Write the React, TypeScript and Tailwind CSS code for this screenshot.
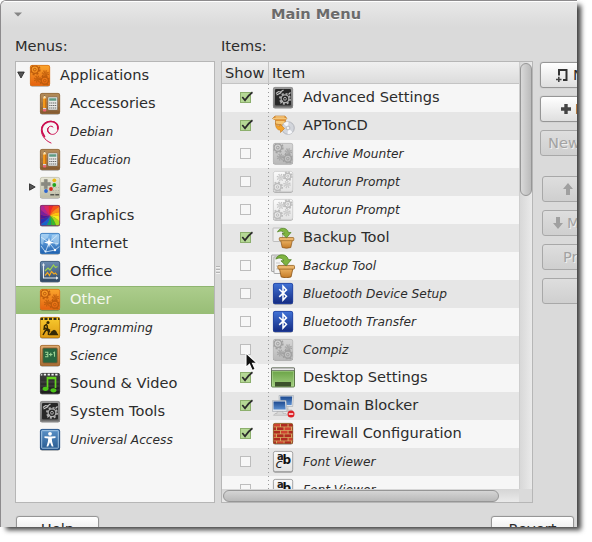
import type { ReactNode } from "react";

type IconName =
  | "gears" | "tools" | "debian" | "games" | "graphics" | "internet" | "office" | "programming"
  | "science" | "video" | "system" | "access" | "apton" | "greyGears" | "paleGears" | "backup"
  | "backupBig" | "bluetooth" | "desktop" | "domain" | "firewall" | "font";

type MenuRow = { label: string; icon: IconName; on?: boolean };

const menus: MenuRow[] = [
  { label: "Accessories", icon: "tools", on: true },
  { label: "Debian", icon: "debian" },
  { label: "Education", icon: "tools" },
  { label: "Games", icon: "games" },
  { label: "Graphics", icon: "graphics", on: true },
  { label: "Internet", icon: "internet", on: true },
  { label: "Office", icon: "office", on: true },
  { label: "Other", icon: "gears", on: true },
  { label: "Programming", icon: "programming" },
  { label: "Science", icon: "science" },
  { label: "Sound & Video", icon: "video", on: true },
  { label: "System Tools", icon: "system", on: true },
  { label: "Universal Access", icon: "access" },
];

const items: MenuRow[] = [
  { label: "Advanced Settings", icon: "system", on: true },
  { label: "APTonCD", icon: "apton", on: true },
  { label: "Archive Mounter", icon: "greyGears" },
  { label: "Autorun Prompt", icon: "paleGears" },
  { label: "Autorun Prompt", icon: "paleGears" },
  { label: "Backup Tool", icon: "backup", on: true },
  { label: "Backup Tool", icon: "backupBig" },
  { label: "Bluetooth Device Setup", icon: "bluetooth" },
  { label: "Bluetooth Transfer", icon: "bluetooth" },
  { label: "Compiz", icon: "greyGears" },
  { label: "Desktop Settings", icon: "desktop", on: true },
  { label: "Domain Blocker", icon: "domain", on: true },
  { label: "Firewall Configuration", icon: "firewall", on: true },
  { label: "Font Viewer", icon: "font" },
  { label: "Font Viewer", icon: "font" },
];

const gradients: [string, string, string][] = [
  ["g-orange", "#fba62c", "#e4600f"],
  ["g-wood", "#b58d5b", "#83592f"],
  ["g-games", "#e9e8d8", "#bdbca6"],
  ["g-blue", "#82bdf0", "#1d5fae"],
  ["g-office", "#6d8db3", "#2f4863"],
  ["g-yellow", "#f9cb2f", "#dd9a12"],
  ["g-frame", "#e0ad72", "#a66b33"],
  ["g-dark", "#3f3f3f", "#1c1c1c"],
  ["g-steel", "#9b9b9b", "#6a6a6a"],
  ["g-access", "#5b93c9", "#27598f"],
  ["g-grey", "#d6d6d6", "#b9b9b9"],
  ["g-pale", "#fbfbfb", "#e2e2e2"],
  ["g-bt", "#4274d8", "#142a80"],
  ["g-desk", "#619c3d", "#a3cf80"],
  ["g-screen", "#1d4a90", "#5b8fd0"],
  ["g-pot", "#f0b869", "#c47a26"],
];

function Defs() {
  return (
    <svg className="absolute h-0 w-0">
      <defs>
        {gradients.map(([id, a, b]) => (
          <linearGradient key={id} id={id} x1="0" y1="0" x2="0" y2="1">
            <stop offset="0" stopColor={a} />
            <stop offset="1" stopColor={b} />
          </linearGradient>
        ))}
        <clipPath id="tile">
          <rect x="2" y="1" width="20" height="21" rx="2" />
        </clipPath>
      </defs>
    </svg>
  );
}

function Tile({ fill, edge, children }: { fill: string; edge: string; children?: ReactNode }) {
  return (
    <>
      <rect x="2" y="2" width="20" height="20.6" rx="2" fill="#000" opacity=".45" />
      <g clipPath="url(#tile)">
        <rect x="2" y="1" width="20" height="21" fill={fill} />
        {children}
      </g>
      <rect x="2.4" y="1.4" width="19.3" height="20.2" rx="1.8" fill="none" stroke={edge} strokeWidth=".8" />
    </>
  );
}

function Gear({ x, y, r, c, w = 1.4 }: { x: number; y: number; r: number; c: string; w?: number }) {
  const step = (2 * Math.PI * (r + 1.2)) / 16;
  return (
    <g fill="none" stroke={c}>
      <circle cx={x} cy={y} r={r} strokeWidth={w} />
      <circle cx={x} cy={y} r={r + 1.2} strokeWidth="1.7" strokeDasharray={`${step} ${step}`} />
      <circle cx={x} cy={y} r={r * 0.36} strokeWidth="1" />
    </g>
  );
}

function GearPair({ c }: { c: string }) {
  return (
    <>
      <Gear x={6.8} y={5.6} r={3.8} c={c} />
      <Gear x={16.8} y={16.6} r={3.6} c={c} />
      <Gear x={17.3} y={9.8} r={1.6} c={c} w={0.9} />
      <Gear x={9.4} y={15} r={1.5} c={c} w={0.9} />
    </>
  );
}

function Pot() {
  return (
    <>
      <path d="M9.500 13.500h12l-1.700 8q-4.300 1.500-8.600 0z" fill="url(#g-pot)" stroke="#8b5518" strokeWidth=".7" />
      <rect x="8.300" y="11.500" width="14.500" height="3.200" rx=".8" fill="#eab56b" stroke="#94601f" strokeWidth=".7" />
      <path d="M6.500 6C8.500 1 16 .8 17.500 6.500H20l-4.500 5.300L11 7.500H13.300C12.500 5 9.500 4.400 6.500 6z" fill="#7fb441" stroke="#4e8021" strokeWidth=".7" />
    </>
  );
}

const hues = ["#e8282f", "#f4511c", "#f98a1a", "#fdc40d", "#f5ee1a", "#a5dc1c", "#37bb2c", "#12a06d", "#1763cc", "#2b30b3", "#4a1a98", "#7b209b", "#b02792", "#da2865"];

function wedge(i: number) {
  const a = (i / hues.length) * 2 * Math.PI - Math.PI / 2;
  const b = ((i + 1) / hues.length) * 2 * Math.PI - Math.PI / 2;
  const p = (t: number, r: number) => `${12 + r * Math.cos(t)} ${11.500 + r * Math.sin(t)}`;
  return `M12 11.5Q${p(a - 0.4, 7)} ${p(a, 17)}L${p(b, 17)}Q${p(b - 0.4, 7)} 12 11.5`;
}

const drawings: Record<IconName, ReactNode> = {
  gears: <Tile fill="url(#g-orange)" edge="#d9731c"><GearPair c="#bd5c0c" /></Tile>,
  greyGears: <Tile fill="url(#g-grey)" edge="#b8b8b8"><GearPair c="#a0a0a0" /></Tile>,
  paleGears: (
    <Tile fill="url(#g-pale)" edge="#c9c9c9">
      <Gear x={6.500} y={17} r={3.500} c="#bcbcbc" />
      <Gear x={16.800} y={6.200} r={3} c="#bcbcbc" />
      <Gear x={9.500} y={7.500} r={1.800} c="#c4c4c4" w={0.9} />
      <Gear x={16} y={14.500} r={1.700} c="#c4c4c4" w={0.9} />
    </Tile>
  ),
  tools: (
    <Tile fill="url(#g-wood)" edge="#926a3d">
      <path d="M2 5h20M2 9h20M2 14h20M2 18h20" stroke="#d0a26d" strokeWidth=".5" opacity=".5" />
      <path d="M5 6.500 6.600 2.800 8.200 6.500V16H5z" fill="#f39a1d" />
      <path d="M5 6.500 6.600 2.800 8.200 6.500z" fill="#f6dfb5" />
      <path d="M6.100 4 6.600 2.800 7.100 4z" fill="#333" />
      <path d="M7.600 6.500V16" stroke="#cf6f10" />
      <path d="M5 16h3.200v1.500H5z" fill="#d7d7d7" />
      <rect x="5" y="17.300" width="3.200" height="2.200" rx=".8" fill="#ed6273" />
      <rect x="10" y="5" width="9.500" height="13" rx=".8" fill="#e7e8e5" stroke="#646058" strokeWidth=".5" />
      <path d="M11.200 6.300h7.100v2.400h-7.100z" fill="#5e9b83" />
      <path d="M11.200 11h7.100M11.200 13.500h7.100M11.200 16h7.100" stroke="#696969" strokeWidth="1.200" strokeDasharray="1.300 .6" />
    </Tile>
  ),
  debian: (
    <g fill="none" stroke="#cb0f50" strokeLinecap="round">
      <path d="M13 23C6.500 20.500 2.500 14 3.500 8.500 4.600 2.700 10.700-.2 16 1.900c3.200 1.300 4.700 4.700 4 7.600-.8 3.300-3.700 5.400-6.500 4.800-3.200-.7-4.800-3.700-3.400-6.300C11.200 5.900 13.900 5.600 15 7" strokeWidth="1" />
      <path d="M6.500 16.500C2.800 11.600 3 6.500 7.300 3.200 10.500.9 15.500.9 18.300 3.500c1.500 1.500 1.900 3.300 1.500 5.300" strokeWidth="1.700" />
      <path d="M12 13.500c-2-.9-2.900-3.200-2-5" strokeWidth="1.200" />
    </g>
  ),
  games: (
    <Tile fill="url(#g-games)" edge="#c3c2b0">
      <path d="M6.300 3.500h3v3h3v3h-3v3h-3v-3h-3v-3h3z" fill="#898980" stroke="#74746c" strokeWidth=".4" />
      <circle cx="16.300" cy="4.300" r="1.900" fill="#e9b813" />
      <circle cx="16.300" cy="9" r="1.900" fill="#23a520" />
      <circle cx="13" cy="13" r="1.900" fill="#d92c1d" />
      <circle cx="8" cy="15" r="1.900" fill="#2c65cf" />
      <path d="M15 14.500h6M15 11.500h6M17 17h4" stroke="#b0b0a3" strokeDasharray="1 1.500" />
      <path d="M12.300 18.700h4m1 0h4" stroke="#56564f" strokeWidth="1.500" />
    </Tile>
  ),
  graphics: <Tile fill="#d33" edge="#7a3a68">{hues.map((h, i) => <path key={h} d={wedge(i)} fill={h} />)}</Tile>,
  internet: (
    <Tile fill="url(#g-blue)" edge="#3b78b8">
      <path d="M2 2h9l-1 4-4 2-1 5-3-2zM14 3l8-1v9l-4 3-2-4-3-2z" fill="#c3e1f8" opacity=".55" />
      <path d="M3 5l8 5.500 8-7M11 10.500 7.500 20M11 10.500l6 7.500 5-4M11 10.500l9 1M7.500 20l9.500-2M3 14l4.500 6" fill="none" stroke="#e3f2fc" strokeWidth=".8" opacity=".9" />
      <path d="M11 5.500l1 3.800 4 1.200-4 1.200-1 4-1-4-4-1.200 4-1.200z" fill="#fff" />
      <circle cx="17" cy="18" r="1.200" fill="#fff" />
      <circle cx="7.500" cy="19.500" r="1" fill="#e7f5ff" />
    </Tile>
  ),
  office: (
    <Tile fill="url(#g-office)" edge="#405a78">
      <path d="M5.500 4v14h14" fill="none" stroke="#e6ecf2" strokeWidth="1.100" />
      <path d="M4 5.500 5.500 3 7 5.500zM18 16.300l2.500 1.700-2.500 1.700z" fill="#e6ecf2" />
      <path d="M7 11l3-3 2 2 3.500-5 2 2.500 2-1" fill="none" stroke="#9ed34a" strokeWidth="1.200" />
      <path d="M7 15.500l2.500-3 2 3 2-4 2.500 2.500 1.500-1 1.500 2" fill="none" stroke="#f1a821" strokeWidth="1.200" />
    </Tile>
  ),
  programming: (
    <Tile fill="url(#g-yellow)" edge="#ba7e12">
      <path d="M2 2.700h20" stroke="#2d281b" strokeWidth="2.500" strokeDasharray="3 1.500" />
      <circle cx="10" cy="6.500" r="1.500" fill="#342905" />
      <path d="M9 8 6.500 10l-.5 4m3-5 .5 4 2.500 1.500M9 12.500l-2 3L5 19m4.500-5.500 1 2.500v3M6 11l6 5" fill="none" stroke="#342905" strokeWidth="1.500" />
      <path d="M10.500 19.300q2-1.800 3-4l2.500-1.500 2 1q1.200 2.500 2.500 4.500z" fill="#342905" />
    </Tile>
  ),
  science: (
    <Tile fill="url(#g-frame)" edge="#a1672e">
      <rect x="4.800" y="4" width="14.500" height="15" rx="1" fill="#28663f" stroke="#8b5c30" strokeWidth=".8" />
      <path d="M7 8.300h2.800v4.400H7M7.700 10.500h2M11 10.500h3.500m-1.750-1.700v3.400M15.300 9l1.200-.7v4.400" fill="none" stroke="#9bd294" strokeWidth="1.100" />
    </Tile>
  ),
  video: (
    <Tile fill="url(#g-dark)" edge="#404040">
      <path d="M2 10h20M2 14h20M2 18h20" stroke="#777" strokeWidth="1" opacity=".35" />
      <path d="M2 2.200h20" stroke="#f2f2f2" strokeWidth="2.600" strokeDasharray="2.300 1.500" />
      <path d="M9.500 17V5.500h8V16" fill="none" stroke="#65d420" strokeWidth="1.700" />
      <path d="M9.500 6.200h8" stroke="#65d420" strokeWidth="2.200" />
      <ellipse cx="7.500" cy="16.800" rx="2.900" ry="2.100" fill="#4bc418" />
      <ellipse cx="15.500" cy="18.300" rx="2.900" ry="2.100" fill="#4bc418" />
    </Tile>
  ),
  system: (
    <Tile fill="url(#g-steel)" edge="#909090">
      <rect x="4" y="3" width="16" height="16.500" rx="1" fill="#282828" />
      <Gear x={14} y={12.800} r={3.900} c="#b0b0b0" w={1.300} />
      <path d="M5 7.500 7.500 5.500l2 .5L12.500 4M5.500 9l5-2.500M9.500 17.500l2.500-3M17.500 8.500l2-2" stroke="#c4c4c4" strokeWidth="1.100" fill="none" />
    </Tile>
  ),
  access: (
    <Tile fill="url(#g-access)" edge="#254e80">
      <rect x="3.700" y="2.700" width="16.600" height="17.500" rx=".6" fill="none" stroke="#b9d4ec" strokeWidth=".8" />
      <circle cx="12" cy="5.800" r="1.900" fill="#fff" />
      <path d="M6.500 8.300 11 8.600h2l4.500-.3v1.600l-3.700.7.300 3 1.400 5h-1.700L12 14.300l-1.800 4.300H8.500l1.400-5 .3-3-3.700-.7z" fill="#fff" />
    </Tile>
  ),
  apton: (
    <>
      <path d="M1.500 4.500 4 2h10l2 2.500-1.500 1.200V10l-3 2-7-2V6z" fill="#dc9137" stroke="#b97422" strokeWidth=".6" />
      <path d="M2 4.700h13.500M4.500 3h9" stroke="#f3c67c" strokeWidth="1.300" />
      <path d="M5 7h8.500v4L5 9.500z" fill="#f5c774" />
      <circle cx="17" cy="14" r="6.300" fill="#d2d5db" stroke="#a3a6ad" strokeWidth=".7" />
      <path d="M17 14 12.500 9.500A6.300 6.300 0 0 1 17.500 7.700zM17 14l4.600 4.300a6.300 6.300 0 0 1-5 2z" fill="#f6f7fa" />
      <circle cx="17" cy="14" r="1.900" fill="#f2f2f2" stroke="#a3a6ad" strokeWidth=".7" />
      <path d="M4.500 9.500q1 3 4.500 2.500v-2l4.500 4.500-4 4v-2.300Q4.500 16 4.500 9.500z" fill="#f2a32c" stroke="#cb7a17" strokeWidth=".6" />
    </>
  ),
  backup: (
    <>
      <rect x="2" y="2" width="9.500" height="13.500" rx=".5" fill="#eee" stroke="#b2b2b2" strokeWidth=".8" />
      <Pot />
    </>
  ),
  backupBig: (
    <>
      <rect x=".5" y="1" width="10" height="16.500" rx=".5" fill="#e2e2e2" stroke="#9b9b9b" strokeWidth=".8" />
      <rect x="3" y="3" width="10" height="16.500" rx=".5" fill="#f4f4f4" stroke="#9b9b9b" strokeWidth=".8" />
      <path d="M5 9h4M5 12h3M5 15h3" stroke="#bbb" strokeWidth=".8" />
      <g transform="translate(-2.700 -1.800) scale(1.150)"><Pot /></g>
    </>
  ),
  bluetooth: (
    <Tile fill="url(#g-bt)" edge="#26449e">
      <path d="M8.200 7.300l7.300 7-3.500 3.700V4.200l3.500 3.700-7.300 7" fill="none" stroke="#fff" strokeWidth="1.500" />
    </Tile>
  ),
  desktop: (
    <>
      <rect x=".5" y="2" width="23" height="19" rx="1" fill="url(#g-desk)" stroke="#43612f" strokeWidth=".8" />
      <path d="M.5 2h23v2.500H.5z" fill="#e9e9e9" stroke="#555" strokeWidth=".6" />
      <rect x="1.600" y="5.300" width="20.800" height="14.700" fill="none" stroke="#b8dc9c" strokeWidth=".7" opacity=".7" />
      <path d="M4 16h16v4.500H4z" fill="#3c512b" />
    </>
  ),
  domain: (
    <>
      <path d="M17 13v3h4l1 1.500h-9" fill="#cfcfcf" stroke="#aaa" strokeWidth=".5" />
      <path d="M8 1.500h14.500l-.8 11H8.500z" fill="#dfe3e8" stroke="#a1a7ae" strokeWidth=".6" />
      <path d="M9.200 2.600h12l-.6 8.400H9.700z" fill="url(#g-screen)" />
      <path d="M1.500 6.500H15l1 11H1.500z" fill="#e3e6ea" stroke="#a1a7ae" strokeWidth=".6" />
      <path d="M2.500 7.600h11.500l.6 8H2.500z" fill="url(#g-screen)" />
      <path d="M6 17.500h6v2h3l1.500 1.800H2.500L4 19.500h2z" fill="#d7d7d7" stroke="#a6a6a6" strokeWidth=".5" />
      <circle cx="20" cy="20" r="3.500" fill="#dc1f25" />
      <path d="M17.800 20h4.400" stroke="#fff" strokeWidth="1.400" />
    </>
  ),
  firewall: (
    <Tile fill="#d4b466" edge="#8c5a32">
      {[0, 1, 2, 3, 4, 5].map((row) =>
        [0, 1, 2, 3].map((col) => (
          <rect key={`${row}-${col}`} x={2.500 + col * 7.500 - (row % 2) * 4} y={1.800 + row * 3.500} width="6.600" height="2.800" fill={(row + col) % 3 === 0 ? "#cf4230" : "#b02a20"} />
        )),
      )}
    </Tile>
  ),
  font: (
    <Tile fill="url(#g-pale)" edge="#8f8f8f">
      <text x="6" y="9.500" fontSize="10" fontWeight="700" fill="#222" fontFamily="DejaVu Sans, sans-serif">a</text>
      <text x="11.500" y="14" fontSize="12" fontWeight="700" fill="#111" fontFamily="DejaVu Sans, sans-serif">b</text>
      <text x="4.500" y="18" fontSize="13" fontStyle="italic" fill="#222" fontFamily="DejaVu Sans, sans-serif">c</text>
    </Tile>
  ),
};

function Icon({ name }: { name: IconName }) {
  return (
    <svg viewBox="0 0 24 24" className="h-6 w-6 shrink-0">
      {drawings[name]}
    </svg>
  );
}

function Label({ row }: { row: MenuRow }) {
  return row.on ? (
    <span className="ml-2 whitespace-nowrap pb-[3px] text-[14.6px]">{row.label}</span>
  ) : (
    <span className="ml-2 whitespace-nowrap text-[12.2px] italic">{row.label}</span>
  );
}

function Check({ on }: { on?: boolean }) {
  return (
    <svg viewBox="0 0 14 12" className="mb-0.5 ml-[18px] h-3 w-3.5">
      <rect x=".5" y="1.500" width="10" height="10" fill={on ? "#b5d895" : "#f7f7f7"} stroke={on ? "#8caf6d" : "#bdbdbd"} />
      {on && <path d="M2.300 6 5 9.300Q8 4.500 12.500 1.300" fill="none" stroke="#2b2b2b" strokeWidth="1.700" />}
    </svg>
  );
}

function SideButton({ children, disabled, className }: { children?: ReactNode; disabled?: boolean; className: string }) {
  const look = disabled
    ? "border-[#a8a8a8] bg-linear-to-b from-[#dedede] to-[#cfcfcf] text-[#a2a2a2] [text-shadow:1px_1px_0_#efefef]"
    : "border-[#969696] bg-linear-to-b from-white to-[#dfdfdf] shadow-[0_0_1px_#999]";
  return (
    <button className={`flex h-[26px] shrink-0 items-center gap-1 overflow-hidden whitespace-nowrap rounded-[3px] border text-left ${look} ${className}`}>
      {children}
    </button>
  );
}

export default function App() {
  return (
    <div className="h-[542px] w-[592px] overflow-hidden bg-white">
      <Defs />
      <div className="relative h-[527px] w-[577px] rounded-tl-[6px] shadow-[5px_4px_5px_-1px_rgba(0,0,0,0.75)]">
        <div className="flex h-full w-full flex-col overflow-hidden rounded-tl-[6px] border-l border-t border-[#8d8b8d] bg-[#dadada] font-['DejaVu_Sans',sans-serif] text-[14.6px] text-[#2c2c2c]">
          <header className="flex h-[26px] shrink-0 items-center border-t border-white bg-linear-to-b from-[#e8e8e8] to-[#dadada] pl-[13px]">
            <svg viewBox="0 0 8 5" className="h-[5px] w-2"><path d="M0 .5h8L4 4.500z" fill="#858585" /></svg>
            <h1 className="ml-[249px] text-[14.6px] font-bold leading-none text-[#6b6b6b] [text-shadow:0_1px_0_white]">Main Menu</h1>
          </header>

          <div className="flex h-[34px] shrink-0 items-center pt-1">
            <span className="ml-3.5 w-[206px]">Menus:</span>
            <span>Items:</span>
          </div>

          <main className="flex h-[442px] shrink-0 pl-3.5">
            <section className="h-full w-[200px] shrink-0 border border-[#b6b6b6] bg-[#f6f6f6]">
              <div className="flex h-7 items-center pl-px">
                <svg viewBox="0 0 8 8" className="mb-0.5 mr-[3px] h-2 w-2"><path d="M.7 1h6.600L4 7z" fill="#555" stroke="#222" strokeWidth=".8" /></svg>
                <Icon name="gears" />
                <span className="ml-2 pb-[3px]">Applications</span>
              </div>
              {menus.map((row) => (
                <div
                  key={row.label}
                  className={`flex h-7 items-center ${row.label === "Other" ? "border-t border-[#8fb570] bg-linear-to-b from-[#accd8c] to-[#98bd76] pb-px text-[#f4f7ef]" : ""}`}
                >
                  <div className="flex w-[22px] shrink-0 justify-end pr-0.5">
                    {row.label === "Games" && (
                      <svg viewBox="0 0 8 8" className="mb-0.5 h-2 w-2"><path d="M1.500.8v6.400L7.200 4z" fill="#555" stroke="#222" strokeWidth=".8" /></svg>
                    )}
                  </div>
                  <Icon name={row.icon} />
                  <Label row={row} />
                </div>
              ))}
            </section>

            <div className="flex w-1.5 shrink-0 flex-col justify-center gap-0.5 px-px pb-[25px]">
              <i className="h-px bg-[#b4b4b4] shadow-[0_1px_0_#f1f1f1]" />
              <i className="h-px bg-[#b4b4b4] shadow-[0_1px_0_#f1f1f1]" />
              <i className="h-px bg-[#b4b4b4] shadow-[0_1px_0_#f1f1f1]" />
            </div>

            <section className="flex h-full w-[312px] shrink-0 border border-[#b6b6b6] bg-[#dadada]">
              <div className="flex w-[297px] flex-col">
                <div className="flex h-[22px] shrink-0 items-center border-b border-[#c4c4c4] bg-linear-to-b from-[#f0f0f0] to-[#dcdcdc]">
                  <span className="h-full w-[47px] border-r border-[#c4c4c4] pl-[3px] leading-[21px]">Show</span>
                  <span className="pl-[3px] leading-[21px]">Item</span>
                </div>
                <div className="h-[405px] overflow-hidden">
                  {items.map((row, i) => (
                    <div key={i} className="flex h-7 items-center odd:bg-[#f6f6f6] even:bg-[#e6e6e6]">
                      <div className="flex h-full w-[46px] shrink-0 items-center"><Check on={row.on} /></div>
                      <i className="mr-0.5 h-full w-px bg-[repeating-linear-gradient(to_bottom,#999_0_1px,transparent_1px_4px)]" />
                      <Icon name={row.icon} />
                      <Label row={row} />
                    </div>
                  ))}
                </div>
                <div className="h-[13px] bg-linear-to-b from-[#d5d5d5] to-[#eaeaea] px-px pt-px">
                  <div className="h-3 w-[276px] rounded-full border border-[#969696] bg-linear-to-b from-[#d5d5d5] to-[#b9b9b9]" />
                </div>
              </div>
              <div className="h-[427px] w-[13px] border-l border-[#cecece] bg-linear-to-r from-[#d8d8d8] to-[#eaeaea] pt-px">
                <div className="h-[133px] w-3 rounded-full border border-[#969696] bg-linear-to-r from-[#d9d9d9] to-[#bababa]" />
              </div>
            </section>

            <aside className="flex h-full min-w-0 flex-1 flex-col gap-2 overflow-hidden pl-[7px] pt-px">
              <SideButton className="w-[104px] pl-[14px]">
                <svg viewBox="0 0 14 14" className="h-3.5 w-3.5 shrink-0"><path d="M4 7.500V2h7.500v10H8" fill="none" stroke="#333" strokeWidth="2" /><path d="M1 11.500h5.500M3.800 8.800v5.200" stroke="#444" strokeWidth="1.600" /></svg>
                <span>New Menu</span>
              </SideButton>
              <SideButton className="w-[104px] pl-[20px]">
                <svg viewBox="0 0 10 10" className="h-2.5 w-2.5 shrink-0"><path d="M3.300 0h3.400v3.300H10v3.400H6.700V10H3.300V6.700H0V3.300h3.300z" fill="#444" /></svg>
                <span>New Item</span>
              </SideButton>
              <SideButton disabled className="w-[104px] pl-[7px]"><span>New Separator</span></SideButton>
              <SideButton disabled className="ml-0.5 mt-3 w-[100px] pl-[20px]">
                <svg viewBox="0 0 10 12" className="h-3 w-2.5 shrink-0"><path d="M5 0l5 6H7v6H3V6H0z" fill="#a0a0a0" /></svg>
                <span>Move Up</span>
              </SideButton>
              <SideButton disabled className="ml-0.5 w-[100px] pl-[10px]">
                <svg viewBox="0 0 10 12" className="h-3 w-2.5 shrink-0"><path d="M5 12l5-6H7V0H3v6H0z" fill="#a0a0a0" /></svg>
                <span>Move Down</span>
              </SideButton>
              <SideButton disabled className="ml-0.5 w-[100px] pl-[20px]"><span>Properties</span></SideButton>
              <SideButton disabled className="ml-0.5 w-[100px]" />
            </aside>
          </main>

          <footer className="flex shrink-0 justify-between pl-[15px] pr-[3px] pt-[13px]">
            <SideButton className="w-[83px] justify-center">Help</SideButton>
            <SideButton className="w-[83px] justify-center">Revert</SideButton>
          </footer>
        </div>

        <svg viewBox="0 0 14 20" className="absolute left-[245px] top-[352px] h-5 w-3.5">
          <path d="M1 1v14.500l3.500-3.200 2.700 6.200 3-1.300-2.700-6H12z" fill="#111" stroke="#fff" strokeWidth="1.100" />
        </svg>
      </div>
    </div>
  );
}
